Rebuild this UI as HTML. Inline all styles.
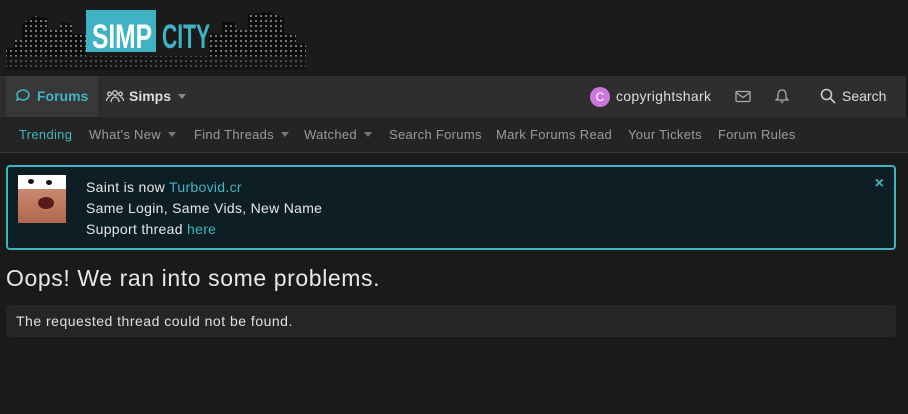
<!DOCTYPE html>
<html><head><style>
*{margin:0;padding:0;box-sizing:border-box}
body{width:908px;height:414px;background:#1a1a1a;font-family:"Liberation Sans",sans-serif;color:#e0e0e0;position:relative;overflow:hidden}
.hdr{height:76px;background:#1b1b1b;position:relative}
.nav{position:absolute;left:0;top:76px;width:906px;height:41px;background:#2e2e2e}
.tab{position:absolute;top:0;height:41px;line-height:41px;font-size:14px;font-weight:bold}
.sub{position:absolute;left:0;top:117px;width:908px;height:36px;background:#242424;border-bottom:1px solid #3a3a3a;font-size:13px;color:#9a9a9a}
.sub span{position:absolute;top:10px;letter-spacing:0.3px}
.car{display:inline-block;width:0;height:0;border-left:4px solid transparent;border-right:4px solid transparent;border-top:5px solid #777;margin-left:7px;vertical-align:2px}
.notice{position:absolute;left:6px;top:165px;width:890px;height:85px;background:#0d1f24;border:2px solid #3fb3bf;border-radius:4px}
.notice p{position:absolute;left:78px;font-size:14px;color:#e8e8e8;letter-spacing:0.3px}
.t{color:#3fb6c2}
h1{position:absolute;left:6px;top:265px;font-size:23px;font-weight:normal;color:#e8e8e8;letter-spacing:0.6px}
.err{position:absolute;left:6px;top:305px;width:890px;height:32px;background:#252525;border-radius:3px;font-size:14px;padding:8px 10px;color:#e0e0e0;letter-spacing:0.5px}
</style></head><body>
<div class="hdr">
<svg width="310" height="72" style="position:absolute;left:4px;top:4px">
<defs><pattern id="w" width="5" height="5" patternUnits="userSpaceOnUse"><rect width="5" height="5" fill="#0c0c0c"/><rect x="1" y="1" width="2" height="2" fill="#777"/></pattern></defs>
<path d="M2 52 L2 44 L10 44 L10 36 L18 36 L18 20 L30 12 L44 14 L44 26 L56 26 L56 18 L68 20 L68 30 L82 30 L82 52 Z" fill="url(#w)"/>
<path d="M205 52 L205 30 L218 30 L218 18 L232 18 L232 26 L244 26 L244 10 L266 8 L280 14 L280 30 L292 30 L292 40 L302 40 L302 52 Z" fill="url(#w)"/>
<rect x="2" y="52" width="300" height="14" fill="url(#w)" opacity="0.5"/>
<rect x="82" y="6" width="70" height="42" fill="#3fb3c4"/>
<text x="88" y="44" font-family="Liberation Sans" font-weight="bold" font-size="34" fill="#fff" textLength="60" lengthAdjust="spacingAndGlyphs">SIMP</text>
<text x="158" y="44" font-family="Liberation Sans" font-weight="bold" font-size="34" fill="#3fb3c4" textLength="48" lengthAdjust="spacingAndGlyphs">CITY</text>
</svg>
</div>
<div class="nav">
<div class="tab" style="left:6px;width:92px;background:#383838;color:#3fb6c2;padding-left:9px"><svg width="16" height="14" style="vertical-align:-2px;margin-right:6px" fill="none" stroke="#3fb6c2" stroke-width="1.5"><path d="M2 6c0-3 3-5 6-5s6 2 6 5-3 5-6 5c-1 0-2 0-3-1l-3 1 1-2c-1-1-1-2-1-3z"/></svg>Forums</div>
<div class="tab" style="left:98px;color:#ddd;padding-left:8px"><svg width="18" height="14" style="vertical-align:-2px;margin-right:5px" fill="none" stroke="#ccc" stroke-width="1.3"><circle cx="9" cy="4" r="2.3"/><circle cx="3.5" cy="5" r="1.8"/><circle cx="14.5" cy="5" r="1.8"/><path d="M5 13c0-3 2-5 4-5s4 2 4 5M0.5 12c0-2 1.5-4 3-4M17.5 12c0-2-1.5-4-3-4"/></svg>Simps<span class="car" style="border-top-color:#888"></span></div>
<div style="position:absolute;left:590px;top:11px;width:20px;height:20px;border-radius:50%;background:#cc77dd;color:#fff;font-size:12px;text-align:center;line-height:20px">C</div>
<div style="position:absolute;left:616px;top:12px;font-size:14px;color:#ddd;letter-spacing:0.3px">copyrightshark</div>
<svg width="16" height="14" style="position:absolute;left:735px;top:14px" fill="none" stroke="#aaa" stroke-width="1.3"><rect x="1" y="1.5" width="14" height="10" rx="1"/><path d="M1 2.5l7 5 7-5"/></svg>
<svg width="14" height="16" style="position:absolute;left:775px;top:12px" fill="none" stroke="#aaa" stroke-width="1.3"><path d="M7 2c-3 0-4 2-4 5v3l-2 2h12l-2-2V7c0-3-1-5-4-5zM5.5 14h3"/></svg>
<svg width="16" height="16" style="position:absolute;left:820px;top:12px" fill="none" stroke="#ccc" stroke-width="1.6"><circle cx="6.5" cy="6.5" r="5"/><path d="M10 10l5 5"/></svg>
<div style="position:absolute;left:842px;top:12px;font-size:14px;color:#ddd">Search</div>
</div>
<div class="sub">
<span style="left:19px;color:#3fb6c2">Trending</span>
<span style="left:89px">What's New<i class="car"></i></span>
<span style="left:194px">Find Threads<i class="car"></i></span>
<span style="left:304px">Watched<i class="car"></i></span>
<span style="left:389px">Search Forums</span>
<span style="left:496px">Mark Forums Read</span>
<span style="left:628px">Your Tickets</span>
<span style="left:718px">Forum Rules</span>
</div>
<div class="notice">
<div style="position:absolute;left:10px;top:8px;width:48px;height:48px;background:linear-gradient(#fff 0,#fff 14px,#c98a70 14px,#b06850 100%)"><div style="position:absolute;left:20px;top:22px;width:16px;height:12px;border-radius:50%;background:#5a1a18"></div><div style="position:absolute;left:8px;top:2px;width:10px;height:9px;border-radius:50%;background:#111;border:2px solid #fff"></div><div style="position:absolute;left:26px;top:3px;width:10px;height:9px;border-radius:50%;background:#111;border:2px solid #fff"></div></div>
<p style="top:12px">Saint is now <span class="t">Turbovid.cr</span></p>
<p style="top:33px">Same Login, Same Vids, New Name</p>
<p style="top:54px">Support thread <span class="t">here</span></p>
<div style="position:absolute;right:10px;top:8px;color:#3fb6c2;font-size:16px;font-weight:bold">×</div>
</div>
<h1>Oops! We ran into some problems.</h1>
<div class="err">The requested thread could not be found.</div>
</body></html>
